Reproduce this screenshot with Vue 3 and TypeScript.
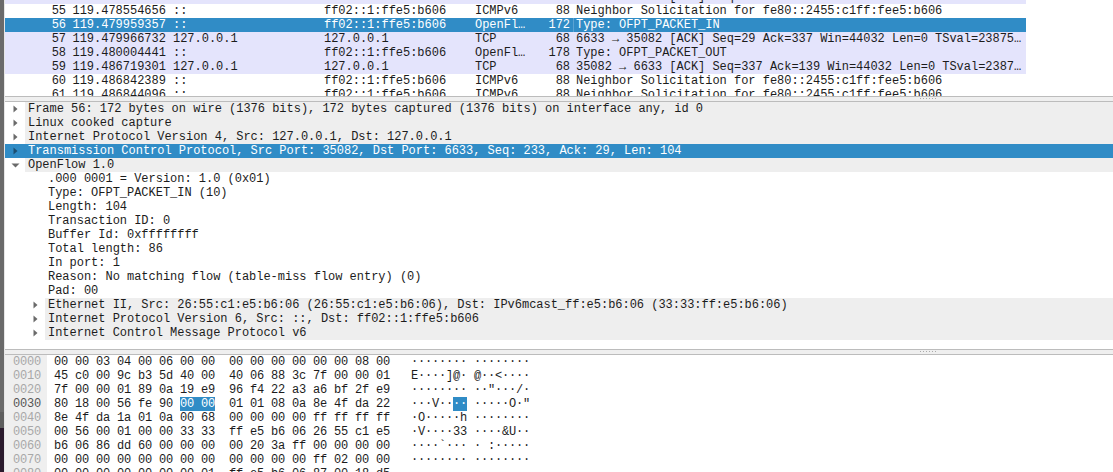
<script setup lang="ts">
interface Pkt { no: number; time: string; src: string; dst: string; proto: string; len: number; info: string; kind: string }
const icmpInfo = 'Neighbor Solicitation for fe80::2455:c1ff:fee5:b606'
const mc = 'ff02::1:ffe5:b606'
const packets: Pkt[] = [
  { no: 54, time: '119.478550000', src: '127.0.0.1', dst: '127.0.0.1', proto: 'TCP', len: 68, info: '6633 → 35082 [ACK] Seq=29 Ack=233 Win=44032', kind: 'tinted' },
  { no: 55, time: '119.478554656', src: '::', dst: mc, proto: 'ICMPv6', len: 88, info: icmpInfo, kind: '' },
  { no: 56, time: '119.479959357', src: '::', dst: mc, proto: 'OpenFl…', len: 172, info: 'Type: OFPT_PACKET_IN', kind: 'selected' },
  { no: 57, time: '119.479966732', src: '127.0.0.1', dst: '127.0.0.1', proto: 'TCP', len: 68, info: '6633 → 35082 [ACK] Seq=29 Ack=337 Win=44032 Len=0 TSval=23875…', kind: 'tinted' },
  { no: 58, time: '119.480004441', src: '::', dst: mc, proto: 'OpenFl…', len: 178, info: 'Type: OFPT_PACKET_OUT', kind: 'tinted' },
  { no: 59, time: '119.486719301', src: '127.0.0.1', dst: '127.0.0.1', proto: 'TCP', len: 68, info: '35082 → 6633 [ACK] Seq=337 Ack=139 Win=44032 Len=0 TSval=2387…', kind: 'tinted' },
  { no: 60, time: '119.486842389', src: '::', dst: mc, proto: 'ICMPv6', len: 88, info: icmpInfo, kind: '' },
  { no: 61, time: '119.486844096', src: '::', dst: mc, proto: 'ICMPv6', len: 88, info: icmpInfo, kind: '' },
]

interface Det { text: string; level: number; arrow: '' | 'right' | 'down'; shaded: boolean; selected?: boolean }
const details: Det[] = [
  { text: 'Frame 56: 172 bytes on wire (1376 bits), 172 bytes captured (1376 bits) on interface any, id 0', level: 0, arrow: 'right', shaded: true },
  { text: 'Linux cooked capture', level: 0, arrow: 'right', shaded: true },
  { text: 'Internet Protocol Version 4, Src: 127.0.0.1, Dst: 127.0.0.1', level: 0, arrow: 'right', shaded: true },
  { text: 'Transmission Control Protocol, Src Port: 35082, Dst Port: 6633, Seq: 233, Ack: 29, Len: 104', level: 0, arrow: 'right', shaded: true, selected: true },
  { text: 'OpenFlow 1.0', level: 0, arrow: 'down', shaded: true },
  { text: '.000 0001 = Version: 1.0 (0x01)', level: 1, arrow: '', shaded: false },
  { text: 'Type: OFPT_PACKET_IN (10)', level: 1, arrow: '', shaded: false },
  { text: 'Length: 104', level: 1, arrow: '', shaded: false },
  { text: 'Transaction ID: 0', level: 1, arrow: '', shaded: false },
  { text: 'Buffer Id: 0xffffffff', level: 1, arrow: '', shaded: false },
  { text: 'Total length: 86', level: 1, arrow: '', shaded: false },
  { text: 'In port: 1', level: 1, arrow: '', shaded: false },
  { text: 'Reason: No matching flow (table-miss flow entry) (0)', level: 1, arrow: '', shaded: false },
  { text: 'Pad: 00', level: 1, arrow: '', shaded: false },
  { text: 'Ethernet II, Src: 26:55:c1:e5:b6:06 (26:55:c1:e5:b6:06), Dst: IPv6mcast_ff:e5:b6:06 (33:33:ff:e5:b6:06)', level: 1, arrow: 'right', shaded: true },
  { text: 'Internet Protocol Version 6, Src: ::, Dst: ff02::1:ffe5:b606', level: 1, arrow: 'right', shaded: true },
  { text: 'Internet Control Message Protocol v6', level: 1, arrow: 'right', shaded: true },
]

interface Hex { off: string; a: string; b: string; c: string; d: string; mark?: boolean }
const hex: Hex[] = [
  { off: '0000', a: '00 00 03 04 00 06 00 00', b: '00 00 00 00 00 00 08 00', c: '········', d: '········' },
  { off: '0010', a: '45 c0 00 9c b3 5d 40 00', b: '40 06 88 3c 7f 00 00 01', c: 'E····]@·', d: '@··<····' },
  { off: '0020', a: '7f 00 00 01 89 0a 19 e9', b: '96 f4 22 a3 a6 bf 2f e9', c: '········', d: '··"···/·' },
  { off: '0030', a: '80 18 00 56 fe 90 ', b: '01 01 08 0a 8e 4f da 22', c: '···V··', d: '·····O·"', mark: true },
  { off: '0040', a: '8e 4f da 1a 01 0a 00 68', b: '00 00 00 00 ff ff ff ff', c: '·O·····h', d: '········' },
  { off: '0050', a: '00 56 00 01 00 00 33 33', b: 'ff e5 b6 06 26 55 c1 e5', c: '·V····33', d: '····&U··' },
  { off: '0060', a: 'b6 06 86 dd 60 00 00 00', b: '00 20 3a ff 00 00 00 00', c: '····`···', d: '· :·····' },
  { off: '0070', a: '00 00 00 00 00 00 00 00', b: '00 00 00 00 ff 02 00 00', c: '········', d: '········' },
  { off: '0080', a: '00 00 00 00 00 00 00 01', b: 'ff e5 b6 06 87 00 18 d5', c: '········', d: '········' },
]
</script>

<template>
  <div class="window">
    <div class="strip">
      <div class="strip-top"></div>
      <div class="strip-mid"></div>
      <div class="strip-bottom"></div>
    </div>
    <div class="main">
      <section class="list">
        <div class="list-inner">
          <div v-for="p in packets" :key="p.no" class="pkt" :class="p.kind">
            <span class="c-no">{{ p.no }}</span>
            <span class="c-time">{{ p.time }}</span>
            <span class="c-src">{{ p.src }}</span>
            <span class="c-dst">{{ p.dst }}</span>
            <span class="c-proto">{{ p.proto }}</span>
            <span class="c-len">{{ p.len }}</span>
            <span class="c-info">{{ p.info }}</span>
          </div>
        </div>
      </section>

      <div class="splitter"><i class="grip"></i></div>

      <section class="details">
        <div
          v-for="d in details"
          :key="d.text"
          class="det"
          :class="[`lvl${d.level}`, { selected: d.selected }]"
        >
          <span class="tw">
            <svg v-if="d.arrow === 'right'" width="5" height="8" viewBox="0 0 5 8"><path d="M0.5 0.5 L4.5 4 L0.5 7.5 Z" /></svg>
            <svg v-else-if="d.arrow === 'down'" width="9" height="5" viewBox="0 0 9 5"><path d="M0.5 0.5 L8.5 0.5 L4.5 4.5 Z" /></svg>
          </span>
          <span class="det-text" :class="{ shaded: d.shaded }">{{ d.text }}</span>
        </div>
      </section>

      <div class="splitter"><i class="grip"></i></div>

      <section class="hex">
        <div v-for="h in hex" :key="h.off" class="hexrow" :class="{ cur: h.mark }">
          <span class="off">{{ h.off }}</span>
          <span class="h1">{{ h.a }}<mark v-if="h.mark">00 00</mark></span>
          <span class="h2">{{ h.b }}</span>
          <span class="a1">{{ h.c }}<mark v-if="h.mark">··</mark></span>
          <span class="a2">{{ h.d }}</span>
        </div>
      </section>
    </div>
  </div>
</template>

<style>
html, body { margin: 0; padding: 0; background: #fff; overflow: hidden; }
</style>

<style scoped>
.window {
  display: flex;
  width: 1113px;
  height: 472px;
  overflow: hidden;
  background: #fff;
  color: #1c1c1c;
  font-family: "Liberation Mono", monospace;
  font-size: 12px;
  line-height: 14px;
  letter-spacing: -0.02px;
}
.strip {
  width: 4px;
  flex: none;
  display: flex;
  flex-direction: column;
  border-right: 1px solid #e6e6e6;
  box-sizing: content-box;
}
.strip-top { height: 412px; background: #6a6a6a; }
.strip-mid { height: 16px; background: #5e5e5e; }
.strip-bottom { flex: 1; background: #2a1a2c; }
.main {
  flex: 1;
  min-width: 0;
  display: flex;
  flex-direction: column;
}

.list { height: 96px; overflow: hidden; flex: none; }
.list-inner { margin-top: -10px; }
.pkt {
  display: flex;
  width: 1021px;
  height: 14px;
  white-space: pre;
}
.pkt.tinted { background: #e4e4fc; }
.pkt.selected { background: #308cc6; color: #fff; }
.pkt span { flex: none; }
.c-no { width: 49px; margin-left: 12px; margin-right: 6.5px; text-align: right; }
.c-time { width: 100.5px; }
.c-src { width: 151px; }
.c-dst { width: 151px; }
.c-proto { width: 55px; }
.c-len { width: 40px; text-align: right; margin-right: 3px; }
.c-info { border-left: 1px solid transparent; padding-left: 2px; }
.pkt.selected .c-info { border-left-color: #5ba3d3; }

.splitter {
  flex: none;
  height: 4px;
  background: #efefef;
  border-top: 1px solid #bcbcbc;
  border-bottom: 1px solid #bcbcbc;
  position: relative;
}
.grip {
  position: absolute;
  left: 915px;
  top: 1px;
  width: 17px;
  height: 1px;
  background: repeating-linear-gradient(90deg, #aaa 0 1px, transparent 1px 3px);
}

.details { flex: none; height: 247px; overflow: hidden; }
.det { display: flex; height: 14px; white-space: pre; }
.tw { flex: none; display: flex; align-items: center; justify-content: center; box-sizing: border-box; }
.tw svg { fill: #6a6a6a; display: block; }
.lvl0 .tw { width: 20px; }
.lvl1 .tw { width: 40px; padding-left: 20px; }
.det-text { flex: 1; padding-left: 3px; }
.det-text.shaded { background: #eeeeee; }
.det.selected { background: #308cc6; color: #fff; }
.det.selected .det-text { background: transparent; }
.det.selected .tw svg { fill: #1d4f70; }

.hex { flex: 1; min-height: 0; overflow: hidden; background: linear-gradient(90deg, #efefef 0 42px, #fff 42px); }
.hexrow { display: flex; height: 14px; white-space: pre; letter-spacing: -0.2px; }
.hexrow span { flex: none; }
.off { width: 49px; padding-left: 8px; box-sizing: border-box; color: #a8a8a8; }
.cur .off { color: #555; }
.h1 { width: 175px; }
.h2 { width: 182px; }
.a1 { width: 63px; }
mark { display: inline-block; height: 14px; background: #308cc6; color: #fff; }
</style>
